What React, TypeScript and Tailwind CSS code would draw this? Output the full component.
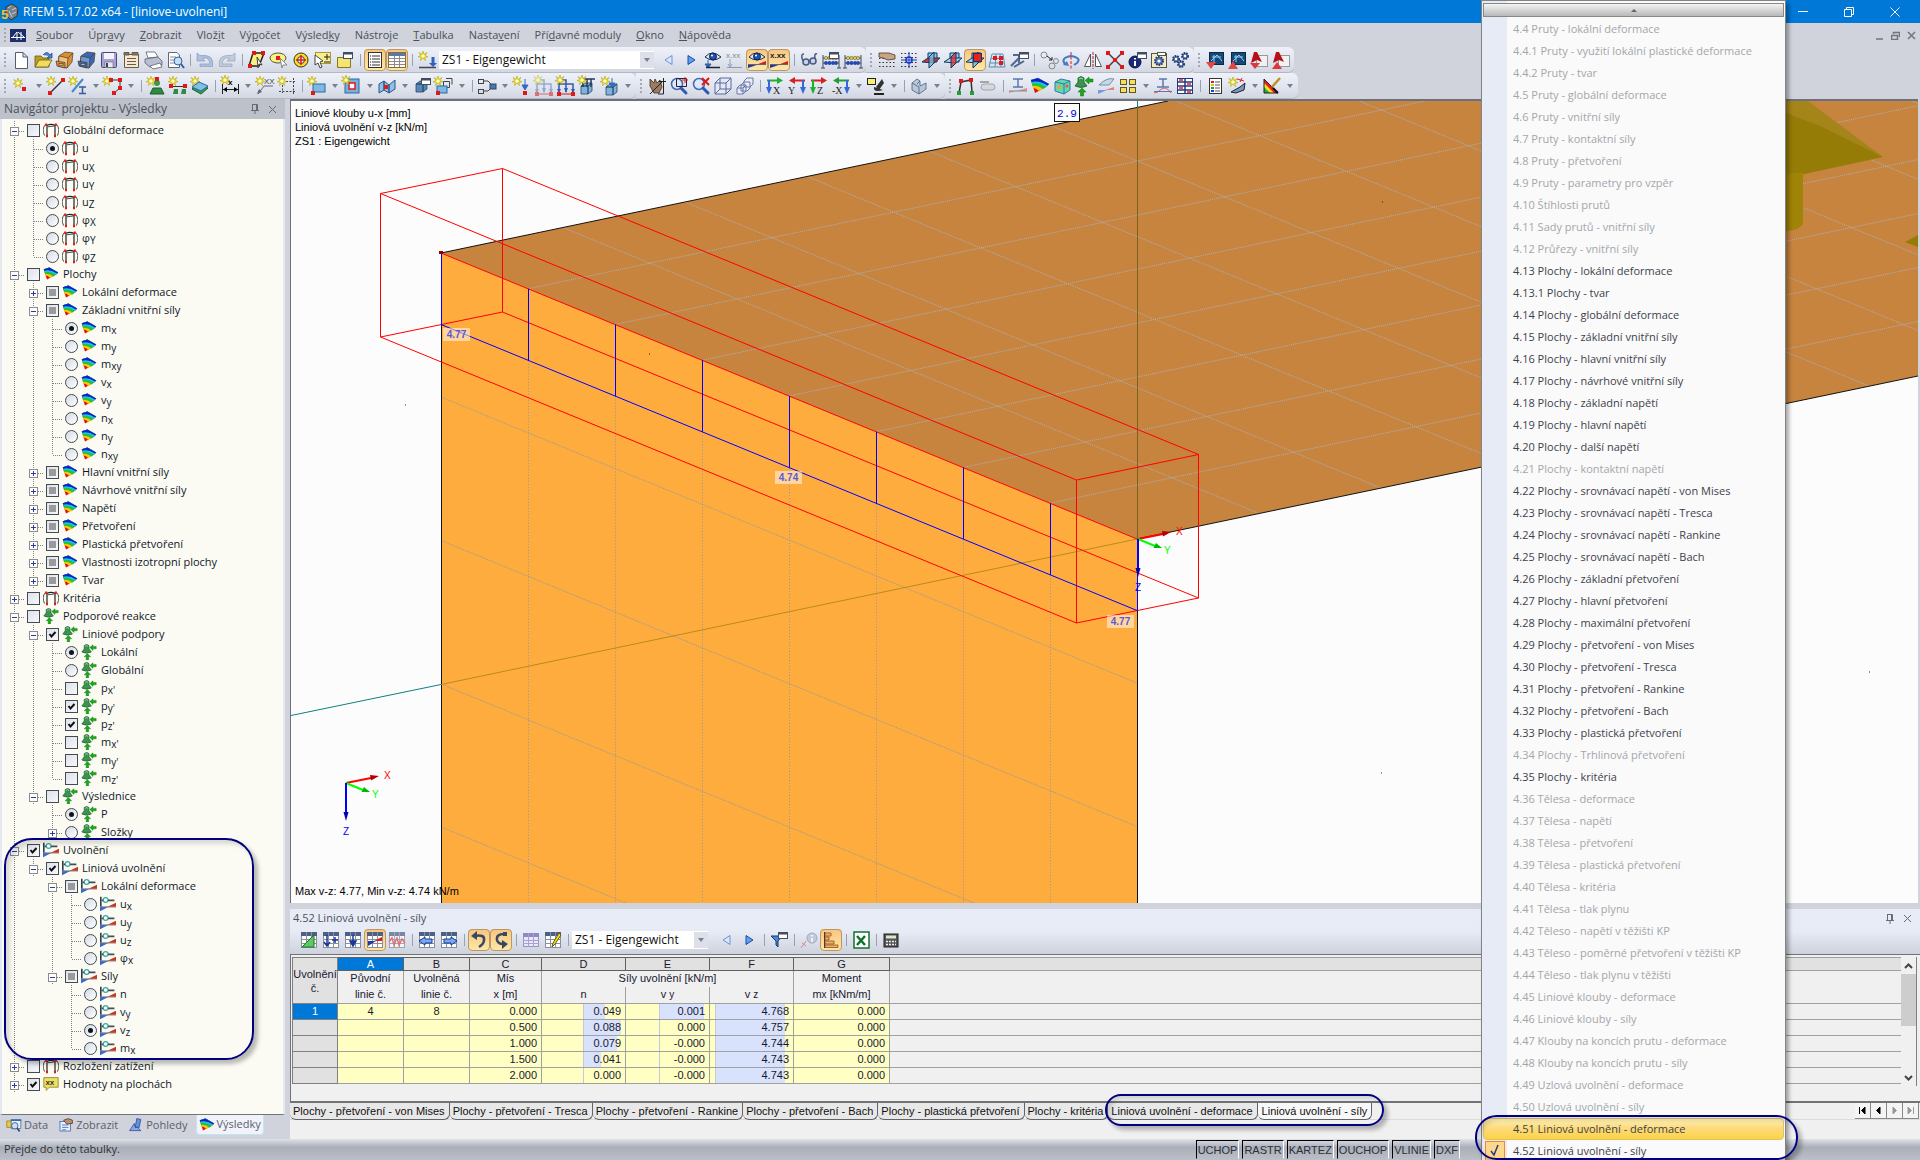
import React, { useState } from 'react';

type Node = {
  label: string;
  sub?: string;
  icon: string;
  input: 'check' | 'radio';
  state?: 'on' | 'off' | 'mixed';
  closed?: boolean;
  children?: Node[];
};

const Star = ({ x, y }: { x: number; y: number }) => (
  <g transform={`translate(${x} ${y})`}>
    <path d="M0-5L1.3-1.6L4-3.6L2.2-.6L5 .8L1.8 1.4L2.6 4.6L0 2.2L-2.6 4.6L-1.8 1.4L-5 .8L-2.2-.6L-4-3.6L-1.3-1.6Z" fill="#f0e020" stroke="#a89a10" strokeWidth=".5" />
    <circle r="1.6" fill="#fffde0" />
  </g>
);

const Dot = ({ x, y, c = '#e01818' }: { x: number; y: number; c?: string }) => (
  <rect x={x - 2} y={y - 2} width="4" height="4" fill={c} />
);

const Win = ({ x, y }: { x: number; y: number }) => (
  <g>
    <rect x={x + 0.5} y={y + 0.5} width="9" height="6" fill="#fff" stroke="#444c60" />
    <rect x={x} y={y} width="10" height="2.5" fill="#444c60" />
  </g>
);

const Support = () => (
  <g>
    <path d="M5 3Q8 0 11 3L11 7L14 11Q8 14 2 11L5 7Z" fill="#3a9450" stroke="#1c5c2c" strokeWidth=".8" />
    <path d="M6 4Q8 2 10 4" stroke="#a0e0b0" fill="none" />
    <path d="M12 5.500L16 2V4H20V7H16V9Z" fill="#18a818" stroke="#107010" strokeWidth=".5" />
    <path d="M9 13L13 17H10.500V21H7.500V17H5Z" fill="#18a818" stroke="#107010" strokeWidth=".5" />
  </g>
);

const Rainbow = () => (
  <g>
    <path d="M2 5L9 3L20 9L17 12L6 18Z" fill="#e01010" />
    <path d="M2 5L9 3L20 9L17 12L10 16Q7 13 4 13Z" fill="#f8c800" />
    <path d="M2 5L9 3L20 9L17 12L14 14Q9 10 3.500 11Z" fill="#20c040" />
    <path d="M2 5L9 3L20 9L17 12Q10 7 3 8.500Z" fill="#18c8e0" />
    <path d="M2 5L9 3L20 9L18.500 10.500Q10 5 2.500 7Z" fill="#1020d0" />
  </g>
);

const Grid = ({ c = '#8a8f9c' }: { c?: string }) => (
  <g>
    <rect x="3.500" y="3.500" width="15" height="15" fill="#fff" stroke={c} />
    <rect x="3" y="3" width="16" height="4" fill="#4a6088" />
    <path d="M3 10.500h16M3 14.500h16M8.500 3v16M13.500 3v16" stroke={c} />
  </g>
);

const Box3 = ({ red }: { red: string }) => (
  <g fill="none" stroke="#103860">
    <path d="M8 4H17V13H8Z" fill="#90c8ec" />
    <path d="M2 13L8 9H20L14 14Z" fill={red === 'flat' ? '#e03030' : '#a8d4f0'} />
    <path d="M9 8L14 3V14L9 19Z" fill={red === 'side' ? '#e03030' : '#78b8e0'} fillOpacity=".8" />
    {red === 'front' && <rect x="9.500" y="4.500" width="8" height="8" fill="#e82020" />}
  </g>
);

const Lens = () => (
  <g>
    <circle cx="9" cy="9" r="5.500" fill="#dbe8ff" fillOpacity=".8" stroke="#4c64a8" strokeWidth="1.500" />
    <path d="M13 13L18 18" stroke="#3058b8" strokeWidth="3" strokeLinecap="round" />
  </g>
);

const Abacus = () => (
  <g>
    <path d="M3 19V6M19 19V6M1 19h4M17 19h4M3 9h16M3 14h16" stroke="#404858" fill="none" />
    {[6, 9.5, 13, 16].map((x) => (
      <g key={x}>
        <circle cx={x} cy="9" r="1.700" fill="#d8c860" stroke="#605818" strokeWidth=".5" />
        <circle cx={x} cy="14" r="1.900" fill="#2848b0" />
      </g>
    ))}
  </g>
);

const Axis = ({ letter, h, v, flip }: { letter: string; h: string; v: string; flip?: boolean }) => (
  <g>
    <g transform={flip ? 'translate(22 0) scale(-1 1)' : undefined}>
      <path d="M3 5.500H14" stroke={h} strokeWidth="2" />
      <path d="M13 2L19 5.500L13 9Z" fill={h} />
      <path d="M5 5V13" stroke={v} strokeWidth="2" />
      <path d="M2 12H8L5 19Z" fill={v} />
    </g>
    <text x={flip ? 2 : 9} y="19" fontSize="10" fontFamily="Liberation Serif, serif" fill="#222">{letter}</text>
  </g>
);

const Floppy = ({ c }: { c: string }) => (
  <g>
    <rect x="3.500" y="3.500" width="15" height="15" rx="1" fill={c} stroke="#4a4a78" />
    <rect x="6" y="4" width="10" height="6" fill="#f4f4fa" />
    <rect x="7" y="13" width="8" height="5.500" fill="#e8e8f0" stroke="#555" strokeWidth=".5" />
    <rect x="8" y="14" width="2" height="4" fill="#444" />
  </g>
);

const Drawer = ({ a, b }: { a: string; b: string }) => (
  <g stroke="#4a3820" strokeWidth=".7">
    <path d="M5 7L11 3L19 4L18 13L13 19L4 17Z" fill={a} />
    <path d="M5 7L14 9L13 19L4 17Z" fill={b} />
    <path d="M14 9L19 4" />
    <path d="M2 12L11 13.500V19L3 17Z" fill={a} />
    <rect x="5" y="14.500" width="4" height="1.500" fill="#fff" />
  </g>
);

const Screen = ({ up }: { up?: boolean }) => (
  <g>
    <rect x="5.500" y="3.500" width="14" height="12" fill="#184878" stroke="#0c2848" />
    <path d="M7 12L13 6L18 12M8 8h9M10 13V6" stroke="#90d0f0" fill="none" />
    {up ? <path d="M2 20L7 12L12 20Z" fill="#e04848" /> : <path d="M2 13H12L7 20Z" fill="#e04848" />}
  </g>
);

const Pdf = ({ up }: { up?: boolean }) => (
  <g>
    <rect x="8.500" y="6.500" width="11" height="11" fill="#f2f2f2" stroke="#999" />
    <path d="M6 3L9 3L14 13L9 11L3 14Z" fill="#b81018" />
    <path d={up ? 'M2 20L7 13L12 20Z' : 'M2 14H12L7 20Z'} fill="#d83840" />
  </g>
);

const Frame = () => (
  <g fill="none">
    <path d="M6 18V5Q11 3 16 5V18" stroke="#222" strokeWidth="1.500" />
    <path d="M3 18Q-1 10 4 4M19 18Q23 10 18 4M7 7L15 6" stroke="#222" />
    <path d="M6 17V20M16 17V20M5 3V6M17 3V6" stroke="#e01818" strokeWidth="2.500" />
  </g>
);

const Release = () => (
  <g>
    <path d="M2 2V15" stroke="#333c44" strokeWidth="2" />
    <circle cx="8" cy="6" r="3" fill="none" stroke="#38a8a8" strokeWidth="1.500" />
    <path d="M3 6.500H5M11 6.500H19" stroke="#445058" strokeWidth="2" />
    <path d="M1 20L12 14.500H1Z" fill="#3868c8" />
    <path d="M9 15L21 9.500V15Z" fill="#c83820" />
    <path d="M1 14.500H21" stroke="#8a8a8a" />
  </g>
);

const Section = ({ c }: { c: string }) => (
  <g fill="none">
    <path d="M6 4H16M11 4V12M6 12H16" stroke="#5878b0" strokeWidth="1.500" />
    <path d="M2 18L20 13V16H2Z" fill={c} />
    <path d="M2 16H20" stroke="#888" />
  </g>
);

const Eye = () => (
  <g>
    <path d="M3 8Q10 0 19 8Q11 14 3 8Z" fill="#dbe8fa" stroke="#20304c" />
    <circle cx="11" cy="7.500" r="3.500" fill="#2050b0" stroke="#102048" />
    <circle cx="10" cy="6.500" r="1" fill="#fff" />
  </g>
);

const Cubes = ({ x, y, c = '#7eb4dc' }: { x: number; y: number; c?: string }) => (
  <path d={`M${x} ${y}l4-3h7l-4 3zh7v8h-7zM${x + 7} ${y}l4-3v8l-4 3z`} fill={c} stroke="#284868" strokeWidth=".8" />
);

const Loads = ({ c }: { c: string }) => (
  <g>
    <path d="M4 18V9H18V18M4 9V5H11V17" fill="none" stroke={c} strokeWidth="1.500" />
    <path d="M9 13h4l-2 5zM2 14h4l-2 4zM16 14h4l-2 4z" fill={c} />
    <path d="M3 19H19" stroke="#c02020" />
    <Dot x={4} y={19} /><Dot x={18} y={19} />
  </g>
);

const Gear = ({ x, y, r }: { x: number; y: number; r: number }) => (
  <g>
    <circle cx={x} cy={y} r={r} fill="#5878b8" stroke="#24386c" strokeWidth="2" strokeDasharray="1.500 1" />
    <circle cx={x} cy={y} r={r / 2.500} fill="#fff" />
  </g>
);

const icons: Record<string, React.ReactNode> = {
  new: <path d="M5.500 3.500H13L17.500 8V19.500H5.500ZM13 3.500V8H17.500" fill="#fff" stroke="#555c6c" />,
  open: <g stroke="#6c5c10" strokeWidth=".8"><path d="M3 18V7H9L11 9H17V18Z" fill="#b8a020" /><path d="M3 18L7 11H20L16 18Z" fill="#f0dc60" /><path d="M11 6Q15 1 18 6L20 4V9H15L17 7" fill="#4880c8" stroke="#284c88" /></g>,
  drawer: <Drawer a="#d89038" b="#f4c078" />,
  drawerBlue: <Drawer a="#3868b8" b="#6898d8" />,
  save: <Floppy c="#a8a0d8" />,
  clip: <g stroke="#665c4c"><path d="M4.500 5.500H18.500V18.500H4.500Z" fill="#f8e8d0" /><path d="M4 3.500H9V6H4ZM12 3.500H18V6H12Z" fill="#887858" /><path d="M7 9.500H16M7 12.500H16M7 15.500H16" /></g>,
  print: <g stroke="#5a6070" strokeWidth=".8"><path d="M6 9L4 3H13L16 8Z" fill="#fff" /><path d="M3 10L16 8L20 12V16L8 18L3 14Z" fill="#b8c0d0" /><path d="M8 17L18 14L20 18L11 20Z" fill="#fff" /></g>,
  preview: <g><path d="M4.500 3.500H13L15.500 6V18.500H4.500Z" fill="#fff" stroke="#667" /><path d="M6 8h6M6 11h4M6 14h4" stroke="#889" /><circle cx="14" cy="12" r="4" fill="#c0e0f8" stroke="#3060a0" /><path d="M17 15L20 19" stroke="#3060a0" strokeWidth="2" /></g>,
  undo: <path d="M3 4V12H11L8.500 9.500Q15 7 16 15H6V17.500H18.500Q21 5 6 6.500Z" fill="#b0c0dc" stroke="#8094b8" strokeWidth=".6" />,
  redo: <path d="M19 4V12H11L13.500 9.500Q7 7 6 15H16V17.500H3.500Q1 5 16 6.500Z" fill="#c4ccdc" stroke="#8c9cb8" strokeWidth=".6" />,
  selPoly: <g><path d="M7 4H18L13 17H3Z" fill="#f8f080" stroke="#222" strokeWidth="1.500" /><Dot x={4} y={17} /><Dot x={8} y={4} /><Dot x={17} y={4} /><path d="M11 8L16 16L13 15L12 19Z" fill="#fff" stroke="#444" /></g>,
  selEllipse: <g><ellipse cx="10" cy="9" rx="8" ry="5" fill="#f8f080" stroke="#554" /><Dot x={10} y={9} /><path d="M12 9L19 16L15 16L14 19Z" fill="#fff" stroke="#888" /></g>,
  selRing: <g><circle cx="11" cy="11" r="7" fill="#f8e020" stroke="#333" /><circle cx="11" cy="11" r="3.500" fill="#fff" stroke="#333" /><path d="M11 6V16M6 11H16" stroke="#e01818" strokeWidth="1.500" /></g>,
  selPlus: <g><rect x="3.500" y="3.500" width="15" height="11" fill="#f8ee90" stroke="#a89838" /><path d="M15 5v6M12 8h6M12 13h6" stroke="#222" /><path d="M3 6L11 12L8 13L10 18L8 19L6 14L3 16Z" fill="#fff" stroke="#444" /></g>,
  selWin: <g><path d="M3.500 8.500H16.500V18.500H3.500Z" fill="#f4e470" stroke="#887820" /><Win x={9} y={3} /></g>,
  list: <g><rect x="4.500" y="3.500" width="13" height="15" fill="#fff" stroke="#333" /><path d="M8 7h8M8 10h8M8 13h8M8 16h8" stroke="#333" /><path d="M6 7h1M6 10h1M6 13h1M6 16h1" stroke="#111" /></g>,
  table: <g><rect x="2.500" y="3.500" width="17" height="15" fill="#fff" stroke="#8a6c30" /><rect x="3" y="4" width="16" height="3" fill="#5878b0" /><path d="M3 9.500h16M3 12.500h16M3 15.500h16M8.500 7v11M13.500 7v11" stroke="#8a8a8a" /></g>,
  newLoad: <g><Star x={7} y={7} /><path d="M17 8V15" stroke="#3060c0" strokeWidth="3" /><path d="M13 14h8l-4 4z" fill="#3060c0" /><path d="M3 18.500H20" stroke="#445" strokeWidth="1.500" /></g>,
  prev: <path d="M14 6.500V15.500L7 11Z" fill="#dce8fa" stroke="#7090d0" />,
  next: <path d="M8 6.500V15.500L15 11Z" fill="#60a0f0" stroke="#1c48a8" />,
  eyeLoad: <g><Eye /><path d="M6 11V16M3 15h6l-3 4z" fill="#3060b0" stroke="#3060b0" /><path d="M4 18.500H18" stroke="#223" strokeWidth="1.500" /></g>,
  xxGrey: <g><text x="2" y="9" fontSize="8" fill="#888">x.xx</text><path d="M6 10V17M4 15l2 3l2-3" stroke="#8ca0c8" fill="none" /><path d="M3 18.500H18" stroke="#999" /></g>,
  eyeRes: <g><Eye /><path d="M2 19L12 15.500H2Z" fill="#2038a8" /><path d="M11 15.500L20 12V16Z" fill="#d02020" /><path d="M2 15.500H20" stroke="#666" /></g>,
  xxRes: <g><text x="2" y="9" fontSize="8" fontWeight="bold" fill="#222">x.xx</text><path d="M2 19L12 15.500H2Z" fill="#2038a8" /><path d="M11 15.500L20 12V16Z" fill="#d02020" /><path d="M2 15.500H20" stroke="#666" /></g>,
  glasses: <g fill="#c8d4ec" stroke="#4a5a80" strokeWidth="1.500"><circle cx="8" cy="13" r="3" /><circle cx="15" cy="12" r="3" /><path d="M5 12Q2 5 6 5M17 10Q16 4 19 5M11 13L12 12" fill="none" /></g>,
  abacusWin: <g><Abacus /><Win x={9} y={3} /></g>,
  abacus: <Abacus />,
  handGrid: <g><path d="M3 9.500h17M3 13.500h17M3 17.500h17" stroke="#333" strokeDasharray="1.500 2" /><path d="M3 4H13L19 6V10L12 11L7 9L3 8Z" fill="#c8a484" stroke="#4c3828" strokeWidth=".8" /></g>,
  snapGrid: <g><path d="M3 4.500h17M3 8.500h17M3 13.500h17M3 17.500h17" stroke="#333" strokeDasharray="1.500 2" /><path d="M11 3V19M3 11H19" stroke="#1838c0" /><circle cx="11" cy="11" r="3" fill="none" stroke="#1838c0" strokeWidth="1.500" /></g>,
  planeXY: <Box3 red="flat" />,
  planeXZ: <Box3 red="side" />,
  planeYZ: <Box3 red="front" />,
  mesh: <g><path d="M6 5H17L19 18H3ZM5 9.500h13M4 14h14M10 5L9 18M14 5L15 18" fill="none" stroke="#5890b8" /><Dot x={9} y={9} /><Dot x={15} y={9} /><Dot x={15} y={14} /></g>,
  scissors: <g><path d="M3 17L12 8M6 18L16 12M5 6H11V14" stroke="#506890" strokeWidth="2" fill="none" /><Win x={11} y={3} /></g>,
  copyMove: <g fill="none" stroke="#222"><circle cx="6" cy="6" r="3" stroke="#888" /><circle cx="18" cy="12" r="2.500" stroke="#888" /><circle cx="14" cy="17" r="3" stroke="#888" /><path d="M9 7L14 11M14 11V8M14 11H11" /></g>,
  rotate: <g fill="none"><path d="M11 3V20" stroke="#e01818" strokeDasharray="3 1.500" /><path d="M5 15Q0 9 11 7Q22 9 17 14L14 16" stroke="#4878c0" strokeWidth="2" /><path d="M3 16L9 17L7 12Z" fill="#4878c0" /></g>,
  mirror: <g stroke="#555"><path d="M8.500 5V17.500H2.500ZM13.500 5V17.500H19.500Z" fill="#fff" /><path d="M11 3V20" stroke="#c02020" strokeDasharray="3 1" /></g>,
  scale: <g><path d="M4 4L18 18M18 4L4 18" stroke="#444" strokeWidth="1.500" /><Dot x={4} y={4} /><Dot x={18} y={4} /><Dot x={4} y={18} /><Dot x={18} y={18} /><Dot x={11} y={11} /></g>,
  info: <g><circle cx="9" cy="13" r="6" fill="#18287c" stroke="#0c143c" /><path d="M9 9v1.500M9 12v5" stroke="#fff" strokeWidth="2" /><Win x={11} y={3} /></g>,
  gearWin: <g><rect x="3.500" y="4.500" width="15" height="14" fill="#f4ecc8" stroke="#554" /><rect x="9.500" y="3.500" width="8" height="3" fill="#fff" stroke="#554" /><Gear x={11} y={12} r={4} /></g>,
  gears: <g><Gear x={6} y={10} r={3} /><Gear x={15} y={7} r={3} /><Gear x={11} y={15} r={3} /></g>,
  scrDown: <Screen />,
  scrUp: <Screen up />,
  pdfDown: <Pdf />,
  pdfUp: <Pdf up />,

  node: <g><Star x={8} y={8} /><Dot x={14} y={14} /></g>,
  line: <g><Star x={6} y={6} /><path d="M5 18L18 5" stroke="#333" strokeWidth="1.500" /><Dot x={5} y={18} /><Dot x={18} y={5} /></g>,
  beam: <g><Star x={6} y={6} /><path d="M5 17L16 4" stroke="#4888c8" strokeWidth="2" /><path d="M12 12H19M15.500 12V18M12 18.500H19" stroke="#3858a0" strokeWidth="1.500" /></g>,
  poly: <g><Star x={5} y={6} /><path d="M9 5H18V13L12 18" fill="none" stroke="#333" /><Dot x={9} y={5} /><Dot x={18} y={5} /><Dot x={18} y={13} /><Dot x={12} y={18} /></g>,
  support: <g><Star x={6} y={6} /><circle cx="12" cy="8" r="3" fill="#3a9a4c" /><path d="M8 13H16L19 19H5Z" fill="#2f8a44" stroke="#1c5c2c" /><Dot x={12} y={4} /></g>,
  supLine: <g><Star x={6} y={6} /><path d="M4 11.500H18" stroke="#333" /><Dot x={4} y={11} /><Dot x={18} y={11} /><path d="M7 14h4v5h-5zM15 14h4v5h-5z" fill="#2f8a44" /></g>,
  supSurf: <g><Star x={6} y={6} /><path d="M3 14L10 9L19 13L12 19Z" fill="#2fa050" stroke="#1c5c2c" /><path d="M3 12L10 7L19 11L12 16Z" fill="#80c0e8" stroke="#2868a0" /></g>,
  dim: <g><Star x={6} y={5} /><path d="M3.500 9V19M19.500 9V19M4 14.500H19" stroke="#222" /><path d="M4 14.500L8 12V17ZM19 14.500L15 12V17Z" /><text x="9" y="10" fontSize="8" fontWeight="bold">x</text></g>,
  note: <g><Star x={6} y={6} /><path d="M4 19L10 11H19" stroke="#667" fill="none" /><path d="M3 19l2-5l3 3z" fill="#667" /><text x="10" y="9" fontSize="8" fill="#444">XX</text></g>,
  frameSel: <g><path d="M6.500 3V18M3 6.500H19M17.500 3V19M3 16.500H19" stroke="#444" strokeDasharray="2 1.500" /><Star x={6} y={6} /></g>,
  rect: <g><Star x={6} y={6} /><rect x="7" y="9" width="12" height="8" fill="#80b8e4" stroke="#2868a0" /><Dot x={7} y={18} /></g>,
  opening: <g><rect x="4" y="4" width="14" height="14" fill="#78b0e0" stroke="#2868a0" /><rect x="8" y="8" width="6" height="6" fill="#fff" stroke="#e01818" strokeWidth="1.500" /><Star x={5} y={5} /></g>,
  fold: <g><path d="M3 9L8 6V15L3 18ZM8 6L13 10V18L8 15ZM13 10L19 5V14L13 18Z" fill="#90c0e4" stroke="#285888" /><Dot x={10} y={12} /></g>,
  solid: <g><Cubes x={5} y={9} c="#5888b8" /><Win x={10} y={3} /></g>,
  solids: <g><Star x={5} y={6} /><path d="M10.500 6.500h6v6h-6zM13 3.500h6v6" fill="none" stroke="#444" /><rect x="4" y="11" width="10" height="7" fill="#80b8e4" stroke="#2868a0" /><Dot x={5} y={18} /></g>,
  connect: <g fill="none" stroke="#444"><rect x="2.500" y="4.500" width="5" height="4" /><rect x="2.500" y="14.500" width="5" height="4" /><path d="M8 6H12L16 10M8 16H12L15 13" /><rect x="14" y="9" width="6" height="5" fill="#3878c8" /></g>,
  nodeLoad: <g><Star x={6} y={6} /><path d="M14 4V10M11 10h6l-3 5z" fill="#3868c0" stroke="#3868c0" /><Dot x={14} y={18} /></g>,
  lineLoad: <g opacity=".55"><Loads c="#5878b8" /><Star x={5} y={5} /></g>,
  memberLoad: <g><Loads c="#3858a8" /><Star x={5} y={5} /></g>,
  surfLoad: <g><Cubes x={4} y={11} /><path d="M6 4V12M10 4V12M14 4V12M5 4H18" stroke="#283858" strokeWidth="1.500" /><Star x={5} y={5} /></g>,
  freeLoad: <g><Star x={6} y={6} /><Cubes x={7} y={12} /><path d="M13 3V9M10 8h6l-3 4z" fill="#3868c0" stroke="#3868c0" /></g>,
  hand: <g><path d="M4 4L8 8L9 4L11 8L14 5L16 12L13 18H8L4 11Z" fill="#9c7c60" stroke="#3c2c20" strokeWidth=".8" /><path d="M4 19L18 5M13 6.500H20M17.500 3V19H12" stroke="#222" fill="none" /></g>,
  zoomWin: <g><Lens /><path d="M8.500 3.500H18.500V11.500H8.500Z" fill="none" stroke="#223" /><path d="M17 2v6M14 5h6" stroke="#e01818" /></g>,
  zoomX: <g><Lens /><path d="M12 3L19 10M19 3L12 10" stroke="#e01818" strokeWidth="2" /></g>,
  cube: <g fill="#e4e8f4" stroke="#5c68a0"><path d="M3 8L8 3H19V14L14 19H3Z" /><path d="M3 8H14V19M14 8L19 3M8 3V14H19M8 14L3 19" fill="none" /></g>,
  cubes: <g fill="#e8ecf6" stroke="#6c78a8"><path d="M10 6l3-3h6v6l-3 3h-6zM7 10l3-3h6v6l-3 3h-6zM3 13l3-3h6v6l-3 3H3z" /><path d="M3 13h6v6M9 13l3-3" fill="none" /></g>,
  axX: <Axis letter="X" h="#20b030" v="#3868d8" />,
  axY: <Axis letter="Y" h="#d82020" v="#3868d8" flip />,
  axZ: <Axis letter="Z" h="#d82020" v="#20b030" />,
  axMinus: <Axis letter="-X" h="#20a030" v="#3868d8" flip />,
  scope: <g><rect x="2.500" y="3.500" width="8" height="6" fill="#f8f070" stroke="#222" /><path d="M17 4L11 12L14 15L19 8ZM9 12Q8 18 18 15" fill="#333" /><path d="M9 19H19" stroke="#222" strokeWidth="2" /></g>,
  block: <path d="M4 8L9 4L12 6V11L18 8V14L11 19L4 15ZM4 8L11 12V19M12 6L9 9" fill="#b8c8d8" stroke="#486078" strokeWidth=".8" />,
  frame: <g><path d="M4 18L6 7L16 5L17 17" fill="none" stroke="#333" strokeWidth="1.500" /><Dot x={6} y={6} /><Dot x={16} y={5} /><Dot x={4} y={18} c="#20a030" /><Dot x={17} y={18} c="#20a030" /></g>,
  resOff: <g opacity=".5"><rect x="4" y="9" width="14" height="6" rx="3" fill="#ccc" stroke="#666" /><path d="M3 7H12" stroke="#666" strokeWidth="2" /></g>,
  section: <Section c="#e89090" />,
  rainbow: <Rainbow />,
  gcube: <g><path d="M4 7L10 4L19 6V15L13 19L4 16Z" fill="#60d8b0" stroke="#3878a0" /><path d="M4 7L13 9L19 6M13 9V19" fill="none" stroke="#3878a0" /><circle cx="8" cy="12" r="2" fill="#f0a040" /><circle cx="16" cy="11" r="1.500" fill="#e06030" /></g>,
  reaction: <Support />,
  shell: <g><path d="M4 10Q12 2 19 4L14 10Z" fill="#c8d8e8" stroke="#7890a8" /><path d="M3 19L12 15H3Z" fill="#7898d8" /><path d="M10 15L19 12V15Z" fill="#e08080" /></g>,
  panes: <g fill="#f4e060" stroke="#605818">{[[3, 4], [12, 4], [3, 12], [12, 12]].map(([x, y]) => <rect key={`${x}${y}`} x={x + 0.5} y={y + 0.5} width="6" height="5" />)}</g>,
  sectCurve: <g><path d="M7 4H15M11 4V12M5 12H17" stroke="#5878b0" strokeWidth="1.500" /><path d="M2 18Q6 18 8 15Q14 10 19 18" fill="none" stroke="#e06060" /><path d="M2 16.500H20" stroke="#5878b0" /></g>,
  tiles: <g><rect x="3.500" y="3.500" width="15" height="15" fill="#fff" stroke="#223a80" /><path d="M3 7h16M3 11h16M3 15h16M11 3v16" stroke="#223a80" strokeWidth="1.500" /><path d="M5 5h4M13 9h4M5 13h4M13 17h4" stroke="#e02020" strokeWidth="1.500" /></g>,
  legend: <g><rect x="5.500" y="3.500" width="12" height="15" fill="#fff" stroke="#333" /><path d="M7 7h3" stroke="#e02020" strokeWidth="2" /><path d="M7 10h3" stroke="#e0c020" strokeWidth="2" /><path d="M7 13h3" stroke="#20a030" strokeWidth="2" /><path d="M7 16h3" stroke="#2040c0" strokeWidth="2" /><path d="M11 7h5M11 10h5M11 13h5M11 16h5" stroke="#555" /></g>,
  probe: <g><Star x={7} y={7} /><path d="M5 17L14 12L19 8L18 15L10 18Z" fill="#7898b8" stroke="#223" /><path d="M11 4L18 6M16 3L14 7" stroke="#e02020" /></g>,
  brush: <g><path d="M3 4V18H17Z" fill="#e82020" /><path d="M3 8V18H13Z" fill="#f8e020" /><path d="M3 12V18H9Z" fill="#20b040" /><path d="M3 4V18H17Z" fill="none" stroke="#222" /><path d="M19 3L11 12" stroke="#c09020" strokeWidth="2.500" /><path d="M12 13L17 18" stroke="#111" strokeWidth="2" /></g>,

  gTri: <g><Grid /><path d="M4 18L16 6V18Z" fill="#60c860" stroke="#187828" /></g>,
  gPlus: <g><Grid /><path d="M7 6v11M4 13l3 4l3-4M12 11h6M15 8v6" stroke="#183898" strokeWidth="1.500" fill="none" /></g>,
  gDown: <g><Grid /><path d="M11 6V12M8 12H14L11 17Z" stroke="#183898" strokeWidth="1.500" fill="#183898" /></g>,
  gRes: <g><Grid /><path d="M4 17L12 12H4Z" fill="#2038a8" /><path d="M10 12L18 8V12Z" fill="#d02020" /></g>,
  gWave: <g opacity=".7"><Grid /><path d="M3 13L6 9L8 16L11 9L13 16L16 10L19 14" fill="none" stroke="#e04848" strokeWidth="1.500" /></g>,
  gLeft: <g><Grid /><path d="M3 12L9 8V10H16V14H9V16Z" fill="#78a8f0" stroke="#183898" /></g>,
  gRight: <g><Grid /><path d="M19 12L13 8V10H6V14H13V16Z" fill="#78a8f0" stroke="#183898" /></g>,
  curveA: <g><path d="M6 7Q17 5 16 11Q16 15 11 18" fill="none" stroke="#384860" strokeWidth="2.500" /><path d="M9 2L3 7L9 11Z" fill="#384860" /></g>,
  curveB: <g><path d="M14 5Q6 5 7 11Q8 15 13 15" fill="none" stroke="#384860" strokeWidth="2.500" /><path d="M12 11L18 15L12 20Z" fill="#384860" /><path d="M13 3H17V7H13Z" fill="#384860" /></g>,
  gPlain: <g><rect x="3.500" y="4.500" width="15" height="13" fill="#e8e8f8" stroke="#9890c8" /><rect x="3" y="4" width="16" height="4" fill="#9088c8" /><path d="M3 11.500h16M3 14.500h16M8.500 4v14M13.500 4v14" stroke="#a8a0d0" /></g>,
  gEdit: <g><Grid /><path d="M17 4L11 14L10 18L13 15L19 6Z" fill="#f0e020" stroke="#665810" /></g>,
  filter: <g><path d="M3 7H14L10 12V18L8 16V12Z" fill="#4888d8" stroke="#183878" /><Win x={10} y={3} /></g>,
  infoCut: <g opacity=".6"><circle cx="14" cy="9" r="5" fill="#b0b8d0" stroke="#7880a8" /><path d="M14 6v1.500M14 9v4" stroke="#fff" strokeWidth="2" /><path d="M3 19L8 12M4 14L8 17" stroke="#c06060" /></g>,
  bars: <g><path d="M4.500 3V19" stroke="#333" /><path d="M5 4h6v3H5zM5 8h4v3H5zM5 12h9v3H5zM5 16h13v2.500H5z" fill="#f0b070" stroke="#905010" strokeWidth=".8" /></g>,
  excel: <g><rect x="4" y="3" width="15" height="16" fill="#fff" stroke="#107030" strokeWidth="1.500" /><path d="M7 7L15 16M15 7L7 16" stroke="#107030" strokeWidth="2.500" /></g>,
  calc: <g><rect x="4" y="5" width="14" height="13" fill="#555" stroke="#222" /><rect x="6" y="6.500" width="10" height="3" fill="#d8e8d0" /><path d="M6 12.500h10M6 15.500h10" stroke="#eee" strokeWidth="1.500" strokeDasharray="2 1" /></g>,
  release: <Release />,
  deform: <Frame />,
  values: <g><path d="M2 3H20V15H9L5 19V15H2Z" fill="#f0e060" stroke="#887c20" /><text x="4" y="12" fontSize="10" fontWeight="bold" fill="#333">xx</text></g>,
  tabData: <g><path d="M2 6H9V14H2Z" fill="#f0c840" stroke="#a08010" /><path d="M7.500 4.500H19.500V15.500H7.500Z" fill="#e8f0fc" stroke="#3868b0" /><path d="M7 5H20" stroke="#3868b0" strokeWidth="2" /><circle cx="12" cy="12" r="4" fill="#c8e0f8" stroke="#304878" /><path d="M15 15L18 19" stroke="#304878" strokeWidth="2" /></g>,
  tabShow: <g><rect x="3.500" y="6.500" width="13" height="12" fill="#e8f0fc" stroke="#3868b0" /><path d="M6 11h8M6 14h8M6 17h5" stroke="#3868b0" /><path d="M8 5L14 3L19 5V9L12 10Z" fill="#b89070" stroke="#4c3828" /></g>,
  tabView: <g><path d="M12 3L17 4L15 14L10 14Z" fill="#6890d8" stroke="#2848a0" /><path d="M3 18H17L13 14H10L9 9Z" fill="#88a8e8" stroke="#2848a0" /></g>,
};

function Icon({ name, small }: { name: string; small?: boolean }) {
  return (
    <svg
      width={small ? 16 : 22}
      height={small ? 16 : 22}
      viewBox={small ? '1 1 20 20' : '0 0 22 22'}
      className="shrink-0"
      aria-hidden="true"
      fontFamily="Liberation Sans, sans-serif"
    >
      {icons[name]}
    </svg>
  );
}

const hot = ['list', 'table', 'eyeRes', 'xxRes', 'planeYZ', 'gRes', 'curveA', 'curveB', 'bars'];

function Tools({ items }: { items: string[] }) {
  return (
    <>
      {items.map((name, i) => {
        if (name === '|') {
          return <span key={i} className="flex w-2 justify-center"><i className="h-3 border-l border-[#9aa0b0]" /></span>;
        }
        if (name === 'v') {
          return (
            <button key={i} className="flex h-[22px] w-[13px] items-center justify-center" aria-label="Více">
              <i className="border-x-3 border-t-4 border-x-transparent border-t-[#7c808a]" />
            </button>
          );
        }
        return (
          <button
            key={i}
            aria-label={name}
            className={
              hot.includes(name)
                ? 'size-[22px] shrink-0 rounded-sm bg-gradient-to-b from-[#f9c480] to-[#fde9a8] outline -outline-offset-1 outline-[#b89868]'
                : 'size-[22px] shrink-0'
            }
          >
            <Icon name={name} />
          </button>
        );
      })}
    </>
  );
}

function Grip() {
  return (
    <span className="flex w-[10px] shrink-0 flex-col items-center gap-[2px]">
      {[0, 1, 2, 3].map((i) => <i key={i} className="size-[2px] bg-[#a4a8b4]" />)}
    </span>
  );
}

function Bar({ children }: { children: React.ReactNode }) {
  return (
    <div className="flex h-[25px] items-center rounded-r-md bg-gradient-to-b from-[#eef1f8] via-[#e2e6f0] to-[#d3d7e1] pr-[2px] shadow-[0_1px_0_#b4b8c2]">
      <Grip />
      {children}
    </div>
  );
}

function CaseSelect({ label, width }: { label: string; width: string }) {
  return (
    <span className={`relative flex h-[18px] items-center bg-white ${width}`}>
      <select aria-label={label} className="h-full w-full appearance-none bg-transparent pl-[3px] text-[12px] leading-[18px] text-[#111]">
        <option>ZS1 - Eigengewicht</option>
      </select>
      <span className="pointer-events-none absolute inset-y-px right-0 flex w-[14px] items-center justify-center bg-[#dde0e8]">
        <i className="border-x-3 border-t-4 border-x-transparent border-t-[#7c808a]" />
      </span>
    </span>
  );
}

const menus = [
  ['', 'S', 'oubor'], ['Úpr', 'a', 'vy'], ['', 'Z', 'obrazit'], ['Vlož', 'i', 't'], ['Vý', 'p', 'očet'], ['Výsled', 'k', 'y'],
  ['Nástro', 'j', 'e'], ['', 'T', 'abulka'], ['Nasta', 'v', 'ení'], ['Pří', 'd', 'avné moduly'], ['', 'O', 'kno'], ['', 'N', 'ápověda'],
];

const radios = (icon: string, list: [string, string?][], on: number): Node[] =>
  list.map(([label, sub], i) => ({ label, sub, icon, input: 'radio', state: i === on ? 'on' : 'off' }));

const mixed = (label: string): Node => ({ label, icon: 'rainbow', input: 'check', state: 'mixed', closed: true });

const tree: Node[] = [
  {
    label: 'Globální deformace', icon: 'deform', input: 'check',
    children: radios('deform', [['u'], ['u', 'X'], ['u', 'Y'], ['u', 'Z'], ['φ', 'X'], ['φ', 'Y'], ['φ', 'Z']], 0),
  },
  {
    label: 'Plochy', icon: 'rainbow', input: 'check',
    children: [
      mixed('Lokální deformace'),
      {
        label: 'Základní vnitřní síly', icon: 'rainbow', input: 'check', state: 'mixed',
        children: radios('rainbow', [['m', 'x'], ['m', 'y'], ['m', 'xy'], ['v', 'x'], ['v', 'y'], ['n', 'x'], ['n', 'y'], ['n', 'xy']], 0),
      },
      mixed('Hlavní vnitřní síly'), mixed('Návrhové vnitřní síly'), mixed('Napětí'), mixed('Přetvoření'),
      mixed('Plastická přetvoření'), mixed('Vlastnosti izotropní plochy'), mixed('Tvar'),
    ],
  },
  { label: 'Kritéria', icon: 'deform', input: 'check', closed: true },
  {
    label: 'Podporové reakce', icon: 'reaction', input: 'check',
    children: [
      {
        label: 'Liniové podpory', icon: 'reaction', input: 'check', state: 'on',
        children: [
          ...radios('reaction', [['Lokální'], ['Globální']], 0),
          { label: 'p', sub: "x'", icon: 'reaction', input: 'check' },
          { label: 'p', sub: "y'", icon: 'reaction', input: 'check', state: 'on' },
          { label: 'p', sub: "z'", icon: 'reaction', input: 'check', state: 'on' },
          { label: 'm', sub: "x'", icon: 'reaction', input: 'check' },
          { label: 'm', sub: "y'", icon: 'reaction', input: 'check' },
          { label: 'm', sub: "z'", icon: 'reaction', input: 'check' },
        ],
      },
      {
        label: 'Výslednice', icon: 'reaction', input: 'check',
        children: [
          { label: 'P', icon: 'reaction', input: 'radio', state: 'on' },
          { label: 'Složky', icon: 'reaction', input: 'radio', closed: true },
        ],
      },
    ],
  },
  {
    label: 'Uvolnění', icon: 'release', input: 'check', state: 'on',
    children: [
      {
        label: 'Liniová uvolnění', icon: 'release', input: 'check', state: 'on',
        children: [
          {
            label: 'Lokální deformace', icon: 'release', input: 'check', state: 'mixed',
            children: radios('release', [['u', 'x'], ['u', 'y'], ['u', 'z'], ['φ', 'x']], -1),
          },
          {
            label: 'Síly', icon: 'release', input: 'check', state: 'mixed',
            children: radios('release', [['n'], ['v', 'y'], ['v', 'z'], ['m', 'x']], 2),
          },
        ],
      },
    ],
  },
  { label: 'Rozložení zatížení', icon: 'deform', input: 'check', closed: true },
  { label: 'Hodnoty na plochách', icon: 'values', input: 'check', state: 'on', closed: true },
];

function Guide({ kind }: { kind: 'line' | 'tee' | 'end' | 'plus' | 'minus' | 'none' }) {
  return (
    <svg width="19" height="18" className="shrink-0" shapeRendering="crispEdges" aria-hidden="true">
      <g stroke="#808080" strokeDasharray="1 1">
        {kind !== 'none' && <path d={kind === 'end' ? 'M9.500 0V10' : 'M9.500 0V18'} />}
        {kind !== 'none' && kind !== 'line' && <path d="M10 10.500H19" />}
      </g>
      {(kind === 'plus' || kind === 'minus') && (
        <g>
          <rect x="5.500" y="6.500" width="8" height="8" fill="#fdfdfd" stroke="#8c8c8c" />
          <path d={kind === 'plus' ? 'M7 10.500H12M9.500 8V13' : 'M7 10.500H12'} stroke="#2c3ca0" />
        </g>
      )}
    </svg>
  );
}

function Toggle({ node }: { node: Node }) {
  const [on, setOn] = useState(node.state === 'on');
  if (node.input === 'radio') {
    return (
      <span className="relative flex w-[19px] shrink-0 items-center justify-center">
        <input type="radio" checked={on} onChange={() => setOn(true)} className="size-[13px] appearance-none rounded-full border border-[#444a54] bg-gradient-to-br from-[#d4dae4] to-white" />
        {on && <i className="pointer-events-none absolute size-[5px] rounded-full bg-[#101418]" />}
      </span>
    );
  }
  return (
    <span className="relative flex w-[19px] shrink-0 items-center justify-center">
      <input type="checkbox" checked={on} onChange={() => setOn(!on)} className="size-[13px] appearance-none border border-[#444a54] bg-gradient-to-br from-[#dde2ea] to-[#f6f7fa]" />
      {node.state === 'mixed' && <i className="pointer-events-none absolute size-[7px] bg-[#9a9a9a]" />}
      {on && (
        <svg width="13" height="13" className="pointer-events-none absolute" aria-hidden="true">
          <path d="M3.500 6L5.500 8.500L9.500 4" fill="none" stroke="#101010" strokeWidth="2" />
        </svg>
      )}
    </span>
  );
}

function Branch({ nodes, rails }: { nodes: Node[]; rails: boolean[] }) {
  return (
    <ul>
      {nodes.map((node, i) => {
        const last = i === nodes.length - 1;
        const opens = node.closed || node.children;
        return (
          <li key={i}>
            <div className="flex h-[18px] items-center">
              {rails.map((r, k) => <Guide key={k} kind={r ? 'line' : 'none'} />)}
              <Guide kind={opens ? (node.closed ? 'plus' : 'minus') : last ? 'end' : 'tee'} />
              <label className="flex h-[18px] items-center">
                <Toggle node={node} />
                <Icon name={node.icon} small />
                <span className="ml-[4px] whitespace-nowrap leading-[18px]">
                  {node.label}
                  {node.sub && <sub className="bottom-[-2px] text-[10px]">{node.sub}</sub>}
                </span>
              </label>
            </div>
            {node.children && <Branch nodes={node.children} rails={[...rails, !last]} />}
          </li>
        );
      })}
    </ul>
  );
}

function Pin() {
  return (
    <svg width="10" height="12" viewBox="0 0 10 12" fill="none" stroke="#666b76" aria-hidden="true">
      <path d="M2.500 1.500H7.500V7M2.500 1V7M6.500 2V7M1 7.500H9M5 8V11" />
    </svg>
  );
}

function Cross() {
  return (
    <svg width="9" height="9" viewBox="0 0 9 9" stroke="#666b76" aria-hidden="true"><path d="M1 1L8 8M8 1L1 8" /></svg>
  );
}

const navTabs = [['tabData', 'Data'], ['tabShow', 'Zobrazit'], ['tabView', 'Pohledy'], ['rainbow', 'Výsledky']];

function Navigator() {
  return (
    <aside className="flex w-[285px] shrink-0 flex-col">
      <header className="flex h-5 items-center bg-[#bcc1ca] pl-1 pr-1 text-[12px] text-[#4b515c]">
        <h2 className="flex-1">Navigátor projektu - Výsledky</h2>
        <button aria-label="Připnout" className="mr-2"><Pin /></button>
        <button aria-label="Zavřít" className="mr-1"><Cross /></button>
      </header>
      <div className="relative flex-1 overflow-hidden border-x-2 border-b border-[#e4e8f2] border-b-[#70747c] bg-[#fbfbf3] pl-[3px] pt-[2px] text-[#101828]">
        <Branch nodes={tree} rails={[]} />
        <span className="pointer-events-none absolute left-[2px] top-[719px] h-[222px] w-[250px] rounded-[28px] border-2 border-[#000080] shadow-[4px_4px_4px_#0004,inset_4px_4px_4px_#0002]" />
      </div>
      <nav className="flex h-[24px] items-start pl-px text-[#5c606a]">
        {navTabs.map(([icon, name]) => (
          <button
            key={name}
            className={
              name === 'Výsledky'
                ? 'ml-1 flex h-5 items-center gap-px rounded-b-sm border border-t-0 border-[#c4e4f0] bg-[#f0f3fa] px-[2px]'
                : 'flex h-5 items-center gap-[2px] px-[5px]'
            }
          >
            <Icon name={icon} small />
            {name}
          </button>
        ))}
      </nav>
    </aside>
  );
}

const step = [0, 1, 2, 3, 4, 5, 6, 7, 8];

function Triad({ x, y }: { x: number; y: number }) {
  return (
    <g transform={`translate(${x} ${y})`} fontSize="10" fontFamily="Liberation Sans, sans-serif">
      <path d="M0 0L25-5" stroke="#ff0000" strokeWidth="2" />
      <path d="M33-7L24-8L25-2.500Z" fill="#b00000" />
      <path d="M0 0L17 7" stroke="#00ff00" strokeWidth="2" />
      <path d="M24 9L18 4L15.500 9Z" fill="#00b800" />
      <path d="M0 0V30" stroke="#0000ff" strokeWidth="2" />
      <path d="M0 38L-2.500 29H2.500Z" fill="#0000b0" />
      <text x="38" y="-4" fill="#ff0000">X</text>
      <text x="26" y="15" fill="#00ff00">Y</text>
      <text x="-3" y="52" fill="#0000ff">Z</text>
    </g>
  );
}

function Tag({ x, y, value }: { x: number; y: number; value: string }) {
  return (
    <g>
      <rect x={x} y={y} width="27" height="13" fill="#fff" fillOpacity=".5" />
      <text x={x + 13.5} y={y + 10} textAnchor="middle" fontSize="10" fontWeight="bold" fontFamily="Liberation Sans, sans-serif" fill="#6058d0">{value}</text>
    </g>
  );
}

function ModelView() {
  return (
    <svg className="block size-full" viewBox="291 101 1627 812" preserveAspectRatio="xMinYMin slice" fill="none" role="img" aria-label="Model">
      <defs>
        <clipPath id="slab"><path d="M441 253L1168 101H1918V376L1137 539Z" /></clipPath>
        <clipPath id="wall"><path d="M441 253L1137 539V913H441Z" /></clipPath>
      </defs>
      <path d="M441 253L1137 539V913H441Z" fill="#ffac3e" />
      <path d="M441 253L1168 101H1918V376L1137 539Z" fill="#c7843f" />
      <g stroke="#aab2bc" strokeDasharray="1 1" clipPath="url(#slab)">
        {step.slice(1, 8).map((i) => <path key={i} d={`M${441 + 87 * i} ${253 + 35.75 * i}L${2041 + 87 * i} ${-82 + 35.75 * i}`} />)}
        {Array.from({ length: 14 }, (_, k) => k + 1).map((k) => (
          <path key={k} d={`M${441 + 122 * k} ${253 - 25.5 * k}l696 286`} />
        ))}
      </g>
      <g stroke="#8e98a4" strokeDasharray="1 1" clipPath="url(#wall)">
        {step.slice(1, 8).map((i) => <path key={i} d={`M${441.5 + 87 * i} ${325 + 35.75 * i}V913`} strokeDasharray="1 2" />)}
        {[397, 540.5, 684, 827].map((y) => <path key={y} d={`M441 ${y}l696 286`} />)}
      </g>
      <path d="M1786 101H1808L1883 157L1786 120Z" fill="#a5841a" />
      <path d="M1786 113L1820 126L1883 157L1786 178Z" fill="#957c06" />
      <path d="M1786 174L1803 172V224Q1798 231 1786 231Z" fill="#a08408" />
      <path d="M1905 242L1918 235V247Z" fill="#957c06" />
      <path d="M441 253L1168 101M1137 539L1918 376M441.500 253V913M1137.500 539V913" stroke="#111" />
      <path d="M291 715.500L441 684.500M1137.500 101V107" stroke="#108080" />
      <path d="M441 684.500L1137 539" stroke="#b88c18" />
      <path d="M1137.500 107V539" stroke="#7c6420" />
      <g stroke="#ff0000">
        <path d="M380.500 193.500L502.500 168.500V312L380.500 337Z" />
        <path d="M1076.500 480L1198.500 454.500V598L1076.500 623Z" />
        <path d="M380.500 193.500L1076.500 480M502.500 168.500L1198.500 454.500M502.500 312L1198.500 598M380.500 337L1076.500 623M441 253L1137 539" />
      </g>
      <g stroke="#0000ff">
        <path d="M441 324.500L1137 610.500" />
        {step.map((i) => <path key={i} d={`M${441.5 + 87 * i} ${253 + 35.75 * i}v71.500`} />)}
      </g>
      <rect x="439" y="251" width="4" height="3" fill="#900000" />
      <path d="M405 405h1M1382 202h1M1381 773h1M1869 672h1M649 354h1" stroke="#222" />
      <Tag x={443} y={328} value="4.77" />
      <Tag x={775} y={471} value="4.74" />
      <Tag x={1107} y={615} value="4.77" />
      <Triad x={1138} y={539} />
      <Triad x={346} y={783} />
      <rect x="1054.500" y="103.500" width="25" height="18" fill="#fcfcfa" stroke="#111" />
      <text x="1067" y="117" textAnchor="middle" fontSize="11" fontFamily="Liberation Mono, monospace" fill="#0000e0">2.9</text>
    </svg>
  );
}

const rows = [
  { no: '1', line: '4', freed: '8', x: '0.000', n: '0.049', vy: '0.001', vz: '4.768' },
  { no: '', line: '', freed: '', x: '0.500', n: '0.088', vy: '0.000', vz: '4.757' },
  { no: '', line: '', freed: '', x: '1.000', n: '0.079', vy: '-0.000', vz: '4.744' },
  { no: '', line: '', freed: '', x: '1.500', n: '0.041', vy: '-0.000', vz: '4.743' },
  { no: '', line: '', freed: '', x: '2.000', n: '0.000', vy: '-0.000', vz: '4.743' },
];

function ValueCell({ value, max, width }: { value: string; max: number; width: string }) {
  const part = Math.round((Math.abs(Number(value)) / max) * 90);
  return (
    <td className="border border-[#a0a0a0] bg-[#ffffc4]">
      <div className={`relative ml-auto h-[15px] border-l border-[#c4c8dc] pr-[4px] text-right ${width}`}>
        <i className="absolute inset-y-0 left-0 bg-[#d8e2fc]" style={{ width: `${part}%` }} />
        <span className="relative">{value}</span>
      </div>
    </td>
  );
}

function ResultTable() {
  const head = 'border-x border-[#a0a0a0] font-normal';
  return (
    <table className="w-full table-fixed border-collapse text-[11px] leading-[15px] text-[#181830]">
      <colgroup>
        <col className="w-[45px]" /><col className="w-[66px]" /><col className="w-[66px]" /><col className="w-[72px]" />
        <col className="w-[84px]" /><col className="w-[84px]" /><col className="w-[84px]" /><col className="w-[96px]" /><col />
      </colgroup>
      <thead>
        <tr className="h-[13px] bg-[#e1e1e1] leading-[12px]">
          <th rowSpan={3} className="border border-[#808080] bg-[#e1e1e1] p-0 font-normal leading-[14px]">Uvolnění<br />č.</th>
          {['A', 'B', 'C', 'D', 'E', 'F', 'G'].map((c) => (
            <th key={c} className={c === 'A' ? 'border border-[#606060] bg-[#0078d7] p-0 font-normal text-white' : 'border border-[#606060] p-0 font-normal'}>{c}</th>
          ))}
          <th className="border-y border-[#a0a0a0] p-0" />
        </tr>
        <tr className="h-[16px] bg-[#f0f0f0]">
          <th className={head}>Původní</th><th className={head}>Uvolněná</th><th className={head}>Mís</th>
          <th colSpan={3} className={head}>Síly uvolnění [kN/m]</th><th className={head}>Moment</th><th />
        </tr>
        <tr className="h-[17px] bg-[#f0f0f0]">
          <th className={head}>linie č.</th><th className={head}>linie č.</th><th className={head}>x [m]</th>
          <th className={head}>n</th>
          <th className={head}>v <span className="text-[10px]">y</span></th>
          <th className={head}>v <span className="text-[10px]">z</span></th>
          <th className={head}>m<span className="text-[10px]">x</span> [kNm/m]</th><th />
        </tr>
      </thead>
      <tbody>
        {rows.map((r, i) => (
          <tr key={i} className="h-4">
            <th className={r.no ? 'border border-[#808080] bg-[#0078d7] p-0 font-normal text-white' : 'border border-[#808080] bg-[#e1e1e1] p-0'}>{r.no}</th>
            <td className="border border-[#a0a0a0] bg-[#ffffc4] text-center">{r.line}</td>
            <td className="border border-[#a0a0a0] bg-[#ffffc4] text-center">{r.freed}</td>
            <td className="border border-[#a0a0a0] bg-[#ffffc4] pr-[4px] text-right">{r.x}</td>
            <ValueCell value={r.n} max={0.088} width="w-[42px]" />
            <ValueCell value={r.vy} max={0.001} width="w-[50px]" />
            <ValueCell value={r.vz} max={4.768} width="w-[78px]" />
            <td className="border border-[#a0a0a0] bg-[#ffffc4] pr-[4px] text-right">0.000</td>
            <td className="border-y border-[#a0a0a0]" />
          </tr>
        ))}
      </tbody>
    </table>
  );
}

const sheets = [
  'Plochy - přetvoření - von Mises', 'Plochy - přetvoření - Tresca', 'Plochy - přetvoření - Rankine', 'Plochy - přetvoření - Bach',
  'Plochy - plastická přetvoření', 'Plochy - kritéria',
];

function Sheet({ name, active }: { name: string; active?: boolean }) {
  return (
    <button
      className={
        active
          ? 'h-[17px] rounded-b-md border-r border-b border-[#606468] bg-[#f8f8f8] px-[4px] leading-4'
          : 'h-[17px] rounded-b-md border-r border-b border-[#606468] bg-[#e8e8e8] pl-[3px] pr-[4px] leading-4'
      }
    >
      {name}
    </button>
  );
}

function TablePanel() {
  return (
    <section className="mt-[5px] flex shrink-0 flex-col bg-[#f0f0f0]">
      <div className="bg-gradient-to-b from-[#e8ecf6] via-[#e6ebf6] to-[#cdd2dc]">
        <header className="flex h-[19px] items-center pl-[3px] pr-2 text-[#4b515c]">
          <h2 className="flex-1">4.52 Liniová uvolnění - síly</h2>
          <button aria-label="Připnout" className="mr-2"><Pin /></button>
          <button aria-label="Zavřít"><Cross /></button>
        </header>
        <div className="flex h-[26px] items-center pb-[2px] pl-2">
          <Tools items={['gTri', 'gPlus', 'gDown', 'gRes', 'gWave', '|', 'gLeft', 'gRight', '|', 'curveA', 'curveB', '|', 'gPlain', 'gEdit', '|']} />
          <CaseSelect label="Zatěžovací stav tabulky" width="w-[136px]" />
          <span className="w-2" />
          <Tools items={['prev', 'next', '|', 'filter', '|', 'infoCut', 'bars', '|', 'excel', '|', 'calc']} />
        </div>
      </div>
      <div className="flex h-[149px] border-b-2 border-l border-t border-[#707478] pl-px pt-[2px] font-['Liberation_Sans',Arial,sans-serif]">
        <div className="flex-1"><ResultTable /></div>
        <div className="flex h-[129px] w-4 flex-col items-center justify-between border-r border-[#808080]">
          <button aria-label="Nahoru" className="h-[17px]"><svg width="9" height="6"><path d="M1 5L4.500 1.500L8 5" fill="none" stroke="#444" strokeWidth="2" /></svg></button>
          <span className="mb-auto h-[52px] w-full bg-[#cdcdcd]" />
          <button aria-label="Dolů" className="h-[17px]"><svg width="9" height="6"><path d="M1 1L4.500 4.500L8 1" fill="none" stroke="#444" strokeWidth="2" /></svg></button>
        </div>
        <span className="w-[3px]" />
      </div>
      <div className="flex h-[17px] border-b border-[#dcdcdc] font-['Liberation_Sans',Arial,sans-serif] text-[11px] text-[#101010]">
        {sheets.map((s) => <Sheet key={s} name={s} />)}
        <span className="relative flex">
          <Sheet name="Liniová uvolnění - deformace" />
          <Sheet name="Liniová uvolnění - síly" active />
          <span className="pointer-events-none absolute -top-[9px] -right-[12px] -left-[3px] h-[32px] rounded-full border-2 border-[#000080] shadow-[4px_4px_4px_#0004,inset_3px_3px_4px_#0002]" />
        </span>
        <span className="ml-auto flex pr-px text-[#000]">
          {['M2.500 2V9M8 2L4.500 5.500L8 9Z', 'M7 2L3.500 5.500L7 9Z', 'M4 2L7.500 5.500L4 9Z', 'M3 2L6.500 5.500L3 9ZM8.500 2V9'].map((d, i) => (
            <button key={d} aria-label={`List ${i + 1}`} className="flex h-4 w-4 items-center justify-center border-r border-b border-[#888] bg-[#f4f4f4]">
              <svg width="11" height="11"><path d={d} fill={i < 2 ? '#000' : '#999'} stroke={i < 2 ? '#000' : '#999'} /></svg>
            </button>
          ))}
        </span>
      </div>
      <div className="h-[19px]" />
    </section>
  );
}

const off = true;
const entries: [string, boolean?][] = [
  ['4.4 Pruty - lokální deformace', off], ['4.4.1 Pruty - využití lokální plastické deformace', off], ['4.4.2 Pruty - tvar', off],
  ['4.5 Pruty - globální deformace', off], ['4.6 Pruty - vnitřní síly', off], ['4.7 Pruty - kontaktní síly', off],
  ['4.8 Pruty - přetvoření', off], ['4.9 Pruty - parametry pro vzpěr', off], ['4.10 Štíhlosti prutů', off],
  ['4.11 Sady prutů - vnitřní síly', off], ['4.12 Průřezy - vnitřní síly', off],
  ['4.13 Plochy - lokální deformace'], ['4.13.1 Plochy - tvar'], ['4.14 Plochy - globální deformace'],
  ['4.15 Plochy - základní vnitřní síly'], ['4.16 Plochy - hlavní vnitřní síly'], ['4.17 Plochy - návrhové vnitřní síly'],
  ['4.18 Plochy - základní napětí'], ['4.19 Plochy - hlavní napětí'], ['4.20 Plochy - další napětí'],
  ['4.21 Plochy - kontaktní napětí', off], ['4.22 Plochy - srovnávací napětí - von Mises'], ['4.23 Plochy - srovnávací napětí - Tresca'],
  ['4.24 Plochy - srovnávací napětí - Rankine'], ['4.25 Plochy - srovnávací napětí - Bach'], ['4.26 Plochy - základní přetvoření'],
  ['4.27 Plochy - hlavní přetvoření'], ['4.28 Plochy - maximální přetvoření'], ['4.29 Plochy - přetvoření - von Mises'],
  ['4.30 Plochy - přetvoření - Tresca'], ['4.31 Plochy - přetvoření - Rankine'], ['4.32 Plochy - přetvoření - Bach'],
  ['4.33 Plochy - plastická přetvoření'], ['4.34 Plochy - Trhlinová přetvoření', off], ['4.35 Plochy - kritéria'],
  ['4.36 Tělesa - deformace', off], ['4.37 Tělesa - napětí', off], ['4.38 Tělesa - přetvoření', off],
  ['4.39 Tělesa - plastická přetvoření', off], ['4.40 Tělesa - kritéria', off], ['4.41 Tělesa - tlak plynu', off],
  ['4.42 Těleso - napětí v těžišti KP', off], ['4.43 Těleso - poměrné přetvoření v těžišti KP', off], ['4.44 Těleso - tlak plynu v těžišti', off],
  ['4.45 Liniové klouby - deformace', off], ['4.46 Liniové klouby - síly', off], ['4.47 Klouby na koncích prutu - deformace', off],
  ['4.48 Klouby na koncích prutu - síly', off], ['4.49 Uzlová uvolnění - deformace', off], ['4.50 Uzlová uvolnění - síly', off],
  ['4.51 Liniová uvolnění - deformace'], ['4.52 Liniová uvolnění - síly'],
];

function TableMenu() {
  return (
    <>
      <div className="absolute top-0 right-[134px] flex h-full w-[305px] flex-col overflow-hidden border-x border-t border-[#808488] bg-gradient-to-r from-[#e6ebf6] from-[25px] to-[#fafafa] to-[25px] shadow-[3px_3px_4px_#0005]">
        <button aria-label="Posunout nahoru" className="mx-px mt-[2px] flex h-[14px] shrink-0 items-center justify-center border border-[#888] bg-gradient-to-b from-[#f4f4f4] to-[#b8b8b8]">
          <i className="border-x-3 border-b-3 border-x-transparent border-b-[#666]" />
        </button>
        <ul className="pt-px">
          {entries.map(([name, disabled]) => {
            const hover = name.startsWith('4.51');
            const checked = name.startsWith('4.52');
            return (
              <li key={name} className="flex h-[22px]">
                <button
                  disabled={disabled}
                  className={
                    hover
                      ? 'mx-px flex flex-1 items-center rounded-sm border border-[#e0c070] bg-gradient-to-b from-[#fdf0b0] via-[#fdd978] via-50% to-[#fdd43c] text-[#3c424c]'
                      : disabled
                        ? 'flex flex-1 items-center text-[#a4a6aa]'
                        : 'flex flex-1 items-center text-[#3c424c]'
                  }
                >
                  <span className={hover ? 'w-[29px] shrink-0' : 'flex w-[31px] shrink-0 pl-[3px]'}>
                    {checked && (
                      <svg width="20" height="20" aria-hidden="true">
                        <rect x=".5" y=".5" width="19" height="19" fill="#fdd888" stroke="#f08830" />
                        <path d="M6 10L9 14L13 4" fill="none" stroke="#283890" strokeWidth="1.500" />
                      </svg>
                    )}
                  </span>
                  {name}
                </button>
              </li>
            );
          })}
        </ul>
      </div>
      <span className="pointer-events-none absolute right-[122px] bottom-0 h-[45px] w-[323px] rounded-[22px] border-2 border-[#000080] shadow-[4px_4px_4px_#0004,inset_3px_3px_4px_#0002]" />
    </>
  );
}

export default function App() {
  return (
    <div className="relative flex h-screen flex-col overflow-hidden bg-[#d0d3dc] font-['Open_Sans','Noto_Sans',sans-serif] text-[11px]">
      <header className="flex h-[23px] shrink-0 items-center bg-[#0078d7] text-[12px] text-white">
        <svg width="18" height="18" className="ml-[1px]" aria-hidden="true">
          <path d="M5 4L11 1L17 5L16 13L10 17L5 12Z" fill="#788088" stroke="#30383c" />
          <path d="M7 5l3-2M11 7l4-2M11 11l4-2M8 8l3 6" stroke="#c8ccd0" />
          <text x="0" y="16" fontSize="13" fontWeight="bold" fontFamily="Liberation Sans, sans-serif" fill="#f8c020">5</text>
        </svg>
        <h1 className="ml-1 flex-1">RFEM 5.17.02 x64 - [liniove-uvolneni]</h1>
        <div className="flex pr-[2px]">
          {['M1 5.500H11', 'M1.500 3.500H8.500V10.500H1.500ZM3.500 3V1.500H10.500V8.500H9', 'M1.500 1.500L10.500 10.500M10.500 1.500L1.500 10.500'].map((d, i) => (
            <button key={d} aria-label={['Minimalizovat', 'Obnovit', 'Zavřít'][i]} className="flex w-[46px] justify-center">
              <svg width="12" height="12" fill="none" stroke="#fff"><path d={d} /></svg>
            </button>
          ))}
        </div>
      </header>

      <nav className="flex h-6 shrink-0 items-center text-[#4b5058]">
        <Grip />
        <svg width="16" height="13" className="mr-[10px]" aria-hidden="true">
          <rect width="16" height="13" fill="#1c2c6c" />
          <path d="M1 8.500H15M3 8L7 3V11M8 3L14 8M11 3V11" stroke="#fff" fill="none" />
        </svg>
        <div className="flex gap-[15px]">
          {menus.map(([a, key, b]) => (
            <button key={a + key + b}>{a}<u>{key}</u>{b}</button>
          ))}
        </div>
        <div className="mr-1 ml-auto flex gap-[7px]">
          {['M1 8H8', 'M.500 4.500H6.500V8.500H.500ZM2.500 3V1.500H8.500V6', 'M1 1L8 8M8 1L1 8'].map((d, i) => (
            <button key={d} aria-label={['Skrýt dokument', 'Obnovit dokument', 'Zavřít dokument'][i]}>
              <svg width="9" height="9" fill="none" stroke="#70747c" strokeWidth="1.500"><path d={d} /></svg>
            </button>
          ))}
        </div>
      </nav>

      <div className="flex h-[26px] shrink-0">
        <Bar>
          <Tools items={['new', 'open', 'drawer', 'drawerBlue', 'save', 'clip', 'print', 'preview', '|', 'undo', 'redo', '|', 'selPoly', 'selEllipse', 'selRing', 'selPlus', 'selWin', '|', 'list', 'table', '|', 'newLoad']} />
          <CaseSelect label="Zatěžovací stav" width="w-[215px] ml-px mr-[4px]" />
          <Tools items={['prev', 'next', 'eyeLoad', 'xxGrey', 'eyeRes', 'xxRes', '|', 'glasses', 'abacusWin', 'abacus']} />
        </Bar>
        <Bar>
          <Tools items={['handGrid', 'snapGrid', 'planeXY', 'planeXZ', 'planeYZ', 'mesh', 'scissors', '|', 'copyMove', 'rotate', 'mirror', 'scale', 'info', 'gearWin', 'gears']} />
        </Bar>
        <Bar>
          <Tools items={['scrDown', 'scrUp', 'pdfDown', 'pdfUp']} />
        </Bar>
      </div>
      <div className="flex h-[26px] shrink-0">
        <Bar>
          <Tools items={['node', 'v', 'line', 'beam', 'v', 'poly', 'v', '|', 'support', 'supLine', 'supSurf', '|', 'dim', 'v', 'note', 'frameSel', '|', 'rect', 'v', 'opening', 'v', 'fold', 'v', 'solid', 'solids', 'v', '|', 'connect', 'v', 'nodeLoad', 'lineLoad', 'memberLoad', 'surfLoad', 'freeLoad', 'v']} />
        </Bar>
        <Bar>
          <Tools items={['hand', 'zoomWin', 'zoomX', 'cube', 'cubes', '|', 'axX', 'axY', 'axZ', 'axMinus', 'v', 'scope', 'v', '|', 'block', 'v']} />
        </Bar>
        <Bar>
          <Tools items={['frame', 'resOff', '|', 'section', 'rainbow', 'gcube', 'reaction', 'shell', 'panes', 'v', 'sectCurve', 'tiles', '|', 'legend', 'probe', 'v', 'brush', 'v']} />
        </Bar>
      </div>

      <div className="flex min-h-0 flex-1">
        <Navigator />
        <main className="ml-[5px] flex min-w-0 flex-1 flex-col">
          <div className="relative mr-[2px] mb-px min-h-0 flex-1 overflow-hidden border-l border-t-2 border-[#6c7078] bg-[#fcfcfc]">
            <ModelView />
            <div className="absolute top-[5px] left-[4px] font-['Liberation_Sans',Arial,sans-serif] text-[11px] leading-[14px] text-black">
              <p>Liniové klouby u-x [mm]</p>
              <p>Liniová uvolnění v-z [kN/m]</p>
              <p>ZS1 : Eigengewicht</p>
            </div>
            <p className="absolute bottom-[5px] left-[4px] font-['Liberation_Sans',Arial,sans-serif] text-[11px] leading-[14px] text-black">Max v-z: 4.77, Min v-z: 4.74 kN/m</p>
          </div>
          <TablePanel />
        </main>
      </div>

      <footer className="flex h-[21px] shrink-0 items-center bg-gradient-to-b from-[#dfe2e8] via-[#a9aeb8] via-40% to-[#bcc0c8] text-[#2c3038]">
        <span className="flex-1 pl-1">Přejde do této tabulky.</span>
        <div className="flex gap-[3px] font-['Liberation_Sans',Arial,sans-serif]">
          {['UCHOP', 'RASTR', 'KARTEZ', 'OUCHOP', 'VLINIE', 'DXF'].map((s) => (
            <span key={s} className="h-[19px] border border-t-black border-r-white border-b-transparent border-l-black px-px leading-[18px]">{s}</span>
          ))}
        </div>
        <span className="w-[460px]" />
      </footer>

      <TableMenu />
    </div>
  );
}
